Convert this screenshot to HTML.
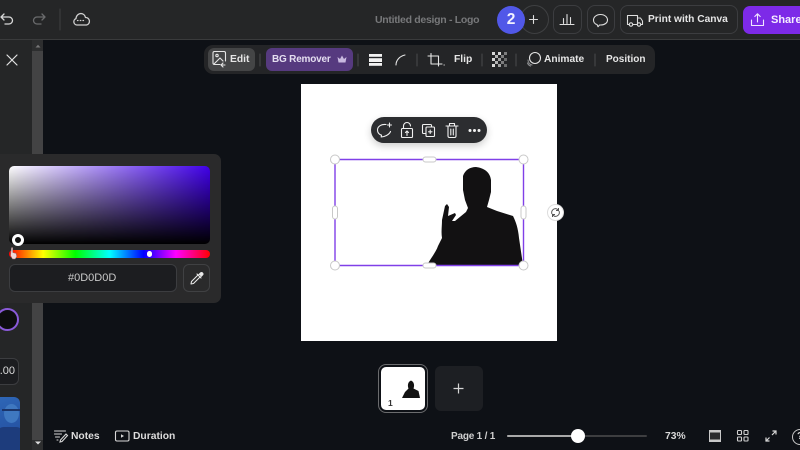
<!DOCTYPE html>
<html><head><meta charset="utf-8"><style>
html,body{margin:0;padding:0;background:#0e1116}
#r{position:relative;width:800px;height:450px;overflow:hidden;background:#0e1116;font-family:"Liberation Sans",sans-serif;color:#e6e6e6;filter:blur(.35px)}
#r div,#r span.t{position:absolute}
.t{white-space:nowrap;font-weight:700;font-size:11px;line-height:14px}
svg{position:absolute;overflow:visible}
.b{box-sizing:border-box;border:1px solid #3c3d40;border-radius:8px}
</style></head><body><div id="r">
<!-- top bar -->
<div style="left:0;top:0;width:800px;height:39px;background:#252627;border-bottom:1px solid #3a3b3c"></div>
<svg style="left:0;top:0" width="100" height="40" fill="none" stroke-width="1.300" stroke-linecap="round" stroke-linejoin="round">
<path d="M4 14.500l-3 3 3 3M1.500 17.500H9a3.500 3.500 0 0 1 0 7H5" stroke="#d8d8d8" transform="translate(0,-.5)"/>
<path d="M42 14.500l3 3-3 3M44.500 17.500H37a3.500 3.500 0 0 0 0 7h4" stroke="#6a6b6d" transform="translate(0,-.5)"/>
<path d="M60 9v21" stroke="#3f4042" stroke-width="1"/>
<path d="M77 25a3.300 3.300 0 0 1-1-6.400 5.200 5.200 0 0 1 5-5.100 5 5 0 0 1 4.500 4 3.800 3.800 0 0 1 1 7.500z" stroke="#d0d0d0"/>
<path d="M77.500 20.500h.5M80.300 20.500h.5M83 20.500h.5" stroke="#d0d0d0"/>
</svg>
<span class="t" style="left:375px;top:13px;color:#77787a;font-size:10.500px;letter-spacing:-.3px">Untitled design - Logo</span>
<!-- avatars -->
<div style="left:520px;top:5px;width:27px;height:27px;border:1px solid #3f4042;border-radius:50%"></div>
<div style="left:497px;top:6px;width:28px;height:28px;background:#5158e8;border-radius:50%;text-align:center;font-size:15.500px;font-weight:700;line-height:28px;color:#f2f2ff">2</div>
<svg style="left:0;top:0" width="800" height="40" fill="none" stroke="#dedede" stroke-width="1.100" stroke-linejoin="round" stroke-linecap="round">
<path d="M529.500 19.500h8M533.500 15.500v8"/>
<path d="M560 24.500h14M563.500 23.500v-5M567 23.500v-9M570.500 23.500v-6"/>
<path d="M597 24.500c-2.500-.5-3.500-2.700-3.500-4.500 0-3 3-5.500 7-5.500s7 2.500 7 5.500-3 5-7 5h-1l-1.500 1.700z"/>
<path d="M627.500 15.500h10v9h-10zM637.500 18h3l2 3v3.500h-5"/>
<circle cx="631" cy="24.500" r="1.700" fill="#252627"/><circle cx="639" cy="24.500" r="1.700" fill="#252627"/>
</svg>
<div class="b" style="left:553px;top:5px;width:29px;height:29px"></div>
<div class="b" style="left:587px;top:5px;width:28px;height:29px"></div>
<div class="b" style="left:620px;top:5px;width:118px;height:29px"></div>
<span class="t" style="left:648px;top:13px;font-size:10.200px">Print with Canva</span>
<div style="left:743px;top:5.500px;width:70px;height:28px;background:#7d2ae8;border-radius:7px"></div>
<svg style="left:750px;top:12px" width="16" height="16" fill="none" stroke="#f0e6ff" stroke-width="1.100" stroke-linecap="round" stroke-linejoin="round"><path d="M1.500 8v5.500h12V8M7.500 10V2M4.800 4.500l2.700-2.700 2.700 2.700"/></svg>
<span class="t" style="left:771px;top:13px;font-size:11px;color:#f4eeff">Share</span>
<!-- side panel -->
<div style="left:0;top:40px;width:32px;height:410px;background:#252627"></div>
<div style="left:32px;top:40px;width:11px;height:410px;background:#2d2e2f"></div>
<div style="left:32px;top:51px;width:11px;height:389px;background:#434344"></div>
<svg style="left:33px;top:43px" width="10" height="6"><path d="M2.500 4.500L5 1.800l2.500 2.700z" fill="#777"/></svg>
<svg style="left:33px;top:440px" width="10" height="6"><path d="M2 1.500h6L5 4.500z" fill="#ddd"/></svg>
<svg style="left:6px;top:54px" width="12" height="12" fill="none" stroke="#e2e2e2" stroke-width="1.200" stroke-linecap="round"><path d="M1 1l10 10M11 1L1 11"/></svg>
<div style="left:-4px;top:308px;width:23px;height:23px;box-sizing:border-box;background:#0d0d0d;border:2px solid #8a5ad8;border-radius:50%"></div>
<div style="left:-12px;top:358px;width:31px;height:27px;box-sizing:border-box;background:#1c1d20;border:1px solid #3c3d40;border-radius:6px"></div>
<span class="t" style="left:-4px;top:364px;font-size:11px;font-weight:400;color:#dcdcdc;width:19px;text-align:right">.00</span>
<div style="left:-10px;top:397px;width:30px;height:60px;border-radius:6px;background:linear-gradient(160deg,#2f68b8,#2450a0 70%,#2b62b5);overflow:hidden">
 <div style="left:14px;top:7px;width:15px;height:19px;border-radius:50%;background:#3f78c0"></div>
 <div style="left:12px;top:12px;width:19px;height:2px;background:#1b3468"></div>
 <div style="left:6px;top:30px;width:28px;height:30px;background:#1d3c7c;border-radius:8px"></div>
</div>
<!-- toolbar -->
<div style="left:204px;top:45px;width:451px;height:29px;background:#242527;border-radius:9px"></div>
<div style="left:208px;top:48px;width:47px;height:23px;background:#444546;border-radius:6px"></div>
<svg style="left:204px;top:45px" width="451" height="29" fill="none" stroke="#e6e6e6" stroke-width="1.100" stroke-linecap="round" stroke-linejoin="round">
<path d="M9 18V8a1.500 1.500 0 0 1 1.500-1.500H20a1.500 1.500 0 0 1 1.500 1.500v8M9 18a1.500 1.500 0 0 0 1.500 1.500H16"/><circle cx="13" cy="10.500" r="1.200"/><path d="M10 19l6-6 3 3M19 22l-2-2 2-2M17 20h4"/>
<path d="M56 21V9M154 21V9M213 21V9M278 21V9M312 21V9M391 21V9" stroke="#4a4b4d" stroke-width="1"/>
<path d="M192 20c0-5 4-9 9-10"/>
<path d="M227 8.500V19h11M224 11h10.500v10" />
<path d="M240 20h.3"/>
<circle cx="331" cy="13" r="5.500"/><path d="M324 15a5.500 5.500 0 0 0 4 5M323.500 18a5.500 5.500 0 0 0 3 3" stroke="#8b8c8e"/>
</svg>
<svg style="left:369px;top:54px" width="14" height="12"><rect width="13" height="2.800" y="0" fill="#f2f2f2"/><rect width="13" height="3.800" y="4.200" fill="#f2f2f2"/><rect width="13" height="2.800" y="9" fill="#f2f2f2"/></svg>
<svg style="left:492px;top:52px" width="15" height="15"><g fill="#d8d8d8"><rect x="0" y="0" width="3" height="3"/><rect x="6" y="0" width="3" height="3"/><rect x="12" y="0" width="3" height="3" opacity=".5"/><rect x="3" y="3" width="3" height="3" opacity=".8"/><rect x="9" y="3" width="3" height="3" opacity=".5"/><rect x="0" y="6" width="3" height="3"/><rect x="6" y="6" width="3" height="3" opacity=".7"/><rect x="12" y="6" width="3" height="3" opacity=".4"/><rect x="3" y="9" width="3" height="3" opacity=".8"/><rect x="9" y="9" width="3" height="3" opacity=".5"/><rect x="0" y="12" width="3" height="3"/><rect x="6" y="12" width="3" height="3" opacity=".7"/><rect x="12" y="12" width="3" height="3" opacity=".4"/></g></svg>
<span class="t" style="left:230px;top:53px;font-size:10.300px">Edit</span>
<div style="left:266px;top:48px;width:87px;height:23px;background:#563a7f;border-radius:6px"></div>
<span class="t" style="left:272px;top:53px;font-size:10px;letter-spacing:-.2px;color:#e4def0">BG Remover</span>
<svg style="left:336px;top:54px" width="12" height="11"><path d="M1.500 3l2.500 2 2-3.500 2 3.500 2.500-2-1 5.500H2.500z" fill="#c9b9e0"/></svg>
<span class="t" style="left:454px;top:53px;font-size:10.300px">Flip</span>
<span class="t" style="left:544px;top:53px;font-size:10.200px">Animate</span>
<span class="t" style="left:606px;top:53px;font-size:10px">Position</span>
<!-- canvas -->
<div style="left:301px;top:84px;width:256px;height:257px;background:#fff"></div>
<svg style="left:0;top:0" width="800" height="450">
<path d="M427 265C431 258 436 252 438 246L442 238C441 232 442 226 442 220L445 206 447 204 449 207 448 216 455 213 456 215 452 221 455 221 466 212 468 208 465 200 463 190 463 176C465 170 470 167 476 167 484 168 490 172 491 180L491 192 489 200 487 207 497 211 513 216C516 222 518 228 519 238L523 265z" fill="#121112"/>
<path d="M335 159.500H523.500V265.500H335z" fill="none" stroke="#8040e8" stroke-width="1.400"/>
<g fill="#fff" stroke="#c8c8c8" stroke-width="1">
<circle cx="335" cy="159.500" r="4.500"/><circle cx="523.500" cy="159.500" r="4.500"/><circle cx="335" cy="265.500" r="4.500"/><circle cx="523.500" cy="265.500" r="4.500"/>
<rect x="423" y="157" width="13" height="5" rx="2.500"/><rect x="423" y="263" width="13" height="5" rx="2.500"/>
<rect x="332.500" y="206" width="5" height="13" rx="2.500"/><rect x="521" y="206" width="5" height="13" rx="2.500"/>
<circle cx="555.500" cy="212.500" r="8" stroke="#ddd"/>
</g>
<g fill="none" stroke="#555" stroke-width="1"><path d="M552 214a3.800 3.800 0 0 1 5-5l1 1M559 211a3.800 3.800 0 0 1-5 5l-1-1M558.500 208v2.500h-2.500M552.500 217v-2.500h2.500"/></g>
</svg>
<!-- float bar -->
<div style="left:371px;top:117px;width:116px;height:26px;background:#2c2d30;border-radius:13px;box-shadow:0 3px 8px rgba(0,0,0,.2)"></div>
<svg style="left:371px;top:117px" width="116" height="26" fill="none" stroke="#f0f0f0" stroke-width="1.100" stroke-linecap="round" stroke-linejoin="round">
<path d="M15 7.500c-4-.5-8.500 1.500-8.500 5.500 0 3 2 4.500 4 5.200l-.3 1.800c3-.3 8-2 9.300-5.500"/><path d="M18.500 6v4M16.500 8h4"/>
<rect x="30.500" y="11.500" width="11" height="9" rx="1"/><path d="M32.500 11.500V9a3.500 3.500 0 0 1 7 0M36 18.500v-4M34.500 15.500l1.500-1.500 1.500 1.500"/>
<path d="M55 16.500h-2.500a1 1 0 0 1-1-1V8.500a1 1 0 0 1 1-1h7a1 1 0 0 1 1 1V10"/><rect x="55" y="10" width="8.500" height="9.500" rx="1"/><path d="M59.200 13v3.500M57.500 14.800h3.500"/>
<path d="M75 9h12M77 9v10a1.500 1.500 0 0 0 1.500 1.500h5a1.500 1.500 0 0 0 1.500-1.500V9M78.500 9V6.500h5V9M79.800 12v6M82.300 12v6"/>
</svg>
<svg style="left:468px;top:128px" width="14" height="5"><circle cx="2" cy="2.500" r="1.500" fill="#f2f2f2"/><circle cx="6.500" cy="2.500" r="1.500" fill="#f2f2f2"/><circle cx="11" cy="2.500" r="1.500" fill="#f2f2f2"/></svg>
<!-- color popup -->
<div style="left:-8px;top:154px;width:229px;height:149px;background:#2a2a2b;border-radius:7px"></div>
<div style="left:8.500px;top:165.500px;width:201.500px;height:78.500px;border-radius:5px;background:linear-gradient(to bottom,rgba(0,0,0,0),#000),linear-gradient(to right,#fff,#4000e8)"></div>
<div style="left:8.500px;top:249.500px;width:201.500px;height:8.500px;border-radius:4px;background:linear-gradient(to right,#f00 0%,#ff0 17%,#0f0 33%,#0ff 50%,#00f 67%,#f0f 83%,#f00 100%)"></div>
<div style="left:146.500px;top:251px;width:5.500px;height:5.500px;border-radius:50%;background:#fff"></div>
<div style="left:12px;top:234px;width:12px;height:12px;box-sizing:border-box;border:3px solid #fff;border-radius:50%;background:#111"></div>
<svg style="left:9px;top:246px" width="10" height="14"><path d="M2.500 1.500h1.200v5l3.500 1 .5 3-1.500 2.500H3.500L1.500 9.500z" fill="#f1d9d9" stroke="#8a6a6a" stroke-width=".5"/></svg>
<div style="left:8.500px;top:264px;width:168px;height:28px;box-sizing:border-box;background:#1c1d20;border:1px solid #3c3d40;border-radius:6px"></div>
<span class="t" style="left:68px;top:270.500px;font-size:11px;font-weight:400;color:#c9c9c9">#0D0D0D</span>
<div style="left:182.500px;top:264px;width:27.500px;height:28px;box-sizing:border-box;border:1px solid #404143;border-radius:6px"></div>
<svg style="left:190px;top:271px" width="14" height="14" fill="none" stroke="#e8e8e8" stroke-width="1.100" stroke-linecap="round" stroke-linejoin="round"><path d="M8 4L1.500 10.500 1 13l2.500-.5L10 6"/><path d="M7 3l4 4M9 3.500l1.500-1.500a1.300 1.300 0 0 1 2 2L11 5.500" fill="#e8e8e8"/></svg>
<!-- pages -->
<div style="left:379px;top:365px;width:48px;height:47px;box-sizing:border-box;background:#fff;border:2px solid #0e1116;outline:1.500px solid #6b6c6e;outline-offset:-.5px;border-radius:7px"></div>
<svg style="left:0;top:0" width="800" height="450"><path d="M402 398L405 392 408.500 388.500C407.500 386 407.500 382 411 380.500 414.500 382 414.500 386 413.500 388.500L418.500 391 420 398z" fill="#121212"/></svg>
<span class="t" style="left:388px;top:396px;font-size:8.500px;color:#333">1</span>
<div style="left:435px;top:366px;width:48px;height:45px;background:#1d1f23;border-radius:6px"></div>
<svg style="left:453px;top:383px" width="12" height="12"><path d="M.5 5.500h10M5.500.5v10" stroke="#d5d5d5" stroke-width="1.200"/></svg>
<!-- bottom bar -->
<svg style="left:54px;top:429px" width="14" height="14" fill="none" stroke="#d8d8d8" stroke-width="1.100" stroke-linecap="round"><path d="M.5 2h11M.5 5h7M1.500 8h4M3 11h1"/><path d="M12 5L6.500 11 6 13l2-.5L13.500 6.500z"/></svg>
<span class="t" style="left:71px;top:430px;font-size:10.300px;color:#dcdcdc">Notes</span>
<svg style="left:115px;top:430px" width="15" height="12" fill="none" stroke="#d8d8d8" stroke-width="1.100"><rect x=".5" y="1" width="13.500" height="10" rx="1.500"/><path d="M6 4.200l3 1.800-3 1.800z" fill="#d8d8d8" stroke="none"/></svg>
<span class="t" style="left:133px;top:430px;font-size:10.300px;color:#dcdcdc">Duration</span>
<span class="t" style="left:451px;top:430px;font-size:10px;letter-spacing:-.2px;color:#d0d0d0">Page 1 / 1</span>
<div style="left:507px;top:435px;width:140px;height:2px;background:#3d3e40;border-radius:1px"></div>
<div style="left:507px;top:435px;width:70px;height:2px;background:#a9a9a9;border-radius:1px"></div>
<div style="left:570.500px;top:429px;width:14px;height:14px;background:#fff;border-radius:50%"></div>
<span class="t" style="left:665px;top:430px;font-size:10.300px;color:#d8d8d8">73%</span>
<svg style="left:709px;top:430px" width="12" height="12"><rect x=".5" y=".5" width="11" height="11" fill="#2a2b2d" stroke="#c8c8c8"/><rect x="0" y="0" width="12" height="2.500" fill="#c8c8c8"/><rect x="0" y="9.500" width="12" height="2.500" fill="#c8c8c8"/></svg>
<svg style="left:737px;top:430px" width="12" height="12" fill="none" stroke="#d0d0d0" stroke-width="1.100"><rect x=".5" y=".5" width="4" height="4" rx=".7"/><rect x="7" y=".5" width="4" height="4" rx=".7"/><rect x=".5" y="7" width="4" height="4" rx=".7"/><rect x="7" y="7" width="4" height="4" rx=".7"/></svg>
<svg style="left:765px;top:430px" width="12" height="12" fill="none" stroke="#d8d8d8" stroke-width="1.200"><path d="M7 5l4-4M7.500 1H11v3.500M1 11l3.500-3.500M1 7.500V11h3.500"/></svg>
<div style="left:792px;top:429px;width:14px;height:14px;border:1px solid #c8c8c8;border-radius:50%;font-size:10px;font-weight:700;text-align:center;line-height:14px;color:#d8d8d8">?</div>
</div></body></html>
